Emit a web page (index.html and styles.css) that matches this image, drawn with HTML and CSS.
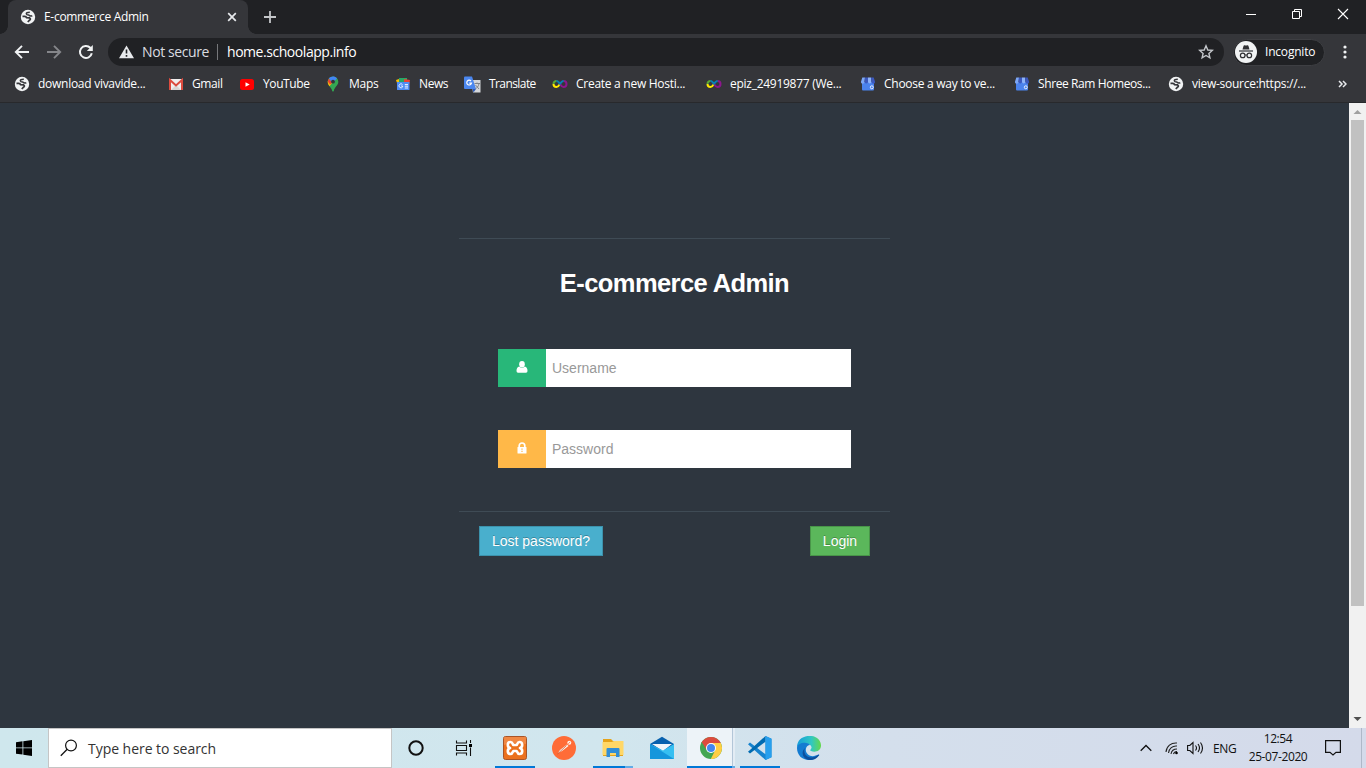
FILE: index.html
```html
<!DOCTYPE html>
<html lang="en">
<head>
<meta charset="utf-8">
<title>E-commerce Admin</title>
<link rel="stylesheet" href="styles.css">
</head>
<body>
<svg class="defs" width="0" height="0" aria-hidden="true">
  <symbol id="globe" viewBox="0 0 16 16"><circle cx="8" cy="8" r="7.200" fill="#f1f3f4"/><path d="M2.500 7.300H4.800Q6 7.400 6.600 8.700L9.600 8.900Q11.200 10 9.500 11.200L7.800 13" fill="none" stroke="#35363a" stroke-width="1.800"/><path d="M9.800 3.200Q6.300 3.200 6.300 4.700 6.400 5.900 8.700 6 10.200 7.700 12.300 6.700" fill="none" stroke="#35363a" stroke-width="1.500"/></symbol>
  <symbol id="infinity" viewBox="0 0 16 16"><path d="M4.600 5A3 3 0 0 0 1.500 8" fill="none" stroke="#5aa936" stroke-width="2"/><path d="M1.500 8c0 1.800 1.300 3 3 3C6 11 6.900 9.800 8 8" fill="none" stroke="#ffe900" stroke-width="2"/><path d="M11.500 5A3 3 0 0 1 14.500 8c0 1.800-1.300 3-3 3C10 11 9.100 9.800 8 8" fill="none" stroke="#8c168d" stroke-width="2"/><path d="M4.400 5C6 5 7 6.200 8 8M8 8C9 6.200 10 5 11.700 5" fill="none" stroke="#087eb5" stroke-width="2"/></symbol>
  <symbol id="shop" viewBox="0 0 16 16"><path d="M2 6h12v7.500a1 1 0 0 1-1 1H3a1 1 0 0 1-1-1z" fill="#4b83ed"/><path d="M2.300 1.500H5L4.500 6a1.800 1.800 0 0 1-3.600 0z" fill="#7da7f5"/><path d="M5 1.500h3V6a1.800 1.800 0 0 1-3.500 0z" fill="#3b58bd"/><path d="M8 1.500h3L11.500 6A1.800 1.800 0 0 1 8 6z" fill="#8db2f8"/><path d="M11 1.500h2.700L15.100 6a1.800 1.800 0 0 1-3.600 0z" fill="#3b58bd"/><circle cx="11.800" cy="11.300" r="1.500" fill="none" stroke="#e6efff"/></symbol>
</svg>

<header class="tabs">
  <div class="tab">
    <svg width="16" height="16"><use href="#globe"/></svg>
    <span class="tab-title">E-commerce Admin</span>
    <svg class="tab-close" width="10" height="10" viewBox="0 0 10 10"><path d="M1.200 1.200 8.800 8.800M8.800 1.200 1.200 8.800" stroke="#e8eaed" stroke-width="1.700"/></svg>
  </div>
  <svg class="plus" width="12" height="12" viewBox="0 0 12 12"><path d="M6 0v12M0 6h12" stroke="#c4c6c9" stroke-width="1.800"/></svg>
  <div class="window-buttons">
    <svg viewBox="0 0 46 30"><path d="M15 14.500h10" stroke="#fff"/></svg>
    <svg viewBox="0 0 46 30"><path d="M15.500 11.500h7v7h-7zM17.500 11V9.500h7v7H23" fill="none" stroke="#fff"/></svg>
    <svg viewBox="0 0 46 30"><path d="m15 9 10 10M25 9 15 19" stroke="#fff" stroke-width="1.100"/></svg>
  </div>
</header>

<nav class="toolbar">
  <svg class="nav-icon" viewBox="0 0 16 16"><path d="M15 8H2M8 1.800 1.800 8 8 14.200" fill="none" stroke="#f1f3f4" stroke-width="1.900"/></svg>
  <svg class="nav-icon" viewBox="0 0 16 16"><path d="M1 8h13M8 1.800 14.200 8 8 14.200" fill="none" stroke="#85868a" stroke-width="1.900"/></svg>
  <svg class="nav-icon" viewBox="0 0 16 16"><path d="M13.800 9.300A6 6 0 1 1 12.300 3.800l1 1" fill="none" stroke="#f1f3f4" stroke-width="2"/><path d="M14.800 1v6h-6z" fill="#f1f3f4"/></svg>
  <div class="omnibox">
    <svg width="15" height="14" viewBox="0 0 15 14"><path d="M7.500.5 15 13.200H0z" fill="#e8eaed"/><path d="M7.500 4.500v4M7.500 10v1.800" stroke="#202124" stroke-width="1.600"/></svg>
    <span class="secure">Not secure</span>
    <span class="url">home.schoolapp.info</span>
    <svg class="star" width="16" height="16" viewBox="0 0 16 16"><path d="m8 1.800 1.800 4.200 4.500.4-3.400 3 1 4.400L8 11.500l-3.900 2.300 1-4.400-3.400-3L6.200 6z" fill="none" stroke="#c4c7cb" stroke-width="1.400"/></svg>
  </div>
  <div class="incognito">
    <svg width="22" height="22" viewBox="0 0 22 22"><circle cx="11" cy="11" r="11" fill="#f1f3f4"/><path d="M7.500 8.500 8.600 4.800q.4-.9 1.300-.5 1.100.5 2.200 0 .9-.4 1.300.5l1.100 3.700z" fill="#303134"/><path d="M4 10h14" stroke="#303134" stroke-width="1.200"/><circle cx="7.700" cy="14.400" r="2.300" fill="none" stroke="#303134" stroke-width="1.200"/><circle cx="14.300" cy="14.400" r="2.300" fill="none" stroke="#303134" stroke-width="1.200"/><path d="M10 14h2" stroke="#303134"/></svg>
    <span>Incognito</span>
  </div>
  <svg class="dots" width="4" height="14" viewBox="0 0 4 14"><g fill="#f1f3f4"><circle cx="2" cy="2" r="1.600"/><circle cx="2" cy="7" r="1.600"/><circle cx="2" cy="12" r="1.600"/></g></svg>
</nav>

<nav class="bookmarks">
  <a><svg><use href="#globe"/></svg><span class="long">download vivavide...</span></a>
  <a><svg viewBox="0 0 16 16"><path d="M1.500 3h13v11h-13z" fill="#f0eeee"/><path d="M3 14 8 9l5 5z" fill="#d8d5d4"/><path d="M2 14V4l6 5.500L14 4v10" fill="none" stroke="#dc4b3e" stroke-width="2"/></svg><span>Gmail</span></a>
  <a><svg viewBox="0 0 16 16"><rect x="1" y="3" width="14" height="11" rx="2.500" fill="#f00"/><path d="m6.500 6.200 4.200 2.300-4.200 2.300z" fill="#fff"/></svg><span>YouTube</span></a>
  <a><svg viewBox="0 0 16 16"><path d="M8 .5a5.300 5.300 0 0 1 5.300 5.300c0 4-3.900 5.200-4.500 9.200q-.8 1.200-1.600 0C6.700 12 3 9.800 2.700 5.800A5.300 5.300 0 0 1 8 .5" fill="#34a853"/><path d="M3 4.500 8 6 4.500 10.200Q2 7 3 4.500" fill="#fbbc04"/><path d="m3.800 2.600 4 3.300L5 8.500 2.800 5.500z" fill="#ea4335"/><path d="M3.900 2.400C6-.2 10-.3 12 2.400L7.500 7z" fill="#4285f4"/><circle cx="8" cy="5.700" r="1.900" fill="#35363a"/></svg><span class="maps">Maps</span></a>
  <a><svg viewBox="0 0 16 16"><path d="m1 4 6-2v5H2z" fill="#fbbc04"/><path d="M4 2h8v6H4z" fill="#28a866"/><path d="m9 3 6 1-1 5H9z" fill="#ea4335"/><path d="M2 6h12.500v7.500q0 .5-.5.500H2.500q-.5 0-.5-.5z" fill="#4f8df5"/><path d="M7.500 8.500a2 2 0 1 0 .1 2.500V10H6M13 8.500H9.800M13 10.200H9.800M13 12H9.800" fill="none" stroke="#e5efff"/></svg><span>News</span></a>
  <a><svg class="big" viewBox="0 0 17 17"><path d="M7 4h9.500v12.500H9z" fill="#d5d7da"/><path d="M1 .5h7l4 12.500H1q-1 0-1-1V1.500q0-1 1-1" fill="#4b87ef"/><path d="M7 5a2.400 2.400 0 1 0 .5 2.200H5.300" fill="none" stroke="#fff" stroke-width="1.200"/><path d="M10.500 7.500H16M13 6.500v1M15 7.500c-.5 3-2 4.500-3.500 5M11.500 9l3.500 4" fill="none" stroke="#777c83" stroke-width=".9"/><path d="m8.500 13 3.500 0-2.500 3.500z" fill="#2d59b6"/></svg><span class="translate">Translate</span></a>
  <a><svg><use href="#infinity"/></svg><span class="long">Create a new Hosti...</span></a>
  <a><svg><use href="#infinity"/></svg><span class="long">epiz_24919877 (We...</span></a>
  <a><svg><use href="#shop"/></svg><span class="long">Choose a way to ve...</span></a>
  <a><svg><use href="#shop"/></svg><span>Shree Ram Homeos...</span></a>
  <a><svg><use href="#globe"/></svg><span class="long">view-source:https://...</span></a>
  <svg class="more" width="9" height="8" viewBox="0 0 9 8"><path d="m1 1 3 3-3 3M5 1l3 3-3 3" fill="none" stroke="#e8eaed" stroke-width="1.500"/></svg>
</nav>

<div class="viewport">
  <main class="page">
    <form class="login">
      <h1>E-commerce Admin</h1>
      <div class="fields">
        <label class="field"><span class="addon user"><svg width="12" height="14" viewBox="0 0 12 14"><ellipse cx="6" cy="4.200" rx="2.800" ry="3.200" fill="#fff"/><path d="M3.200 6.500Q.5 7 .5 11q0 1.700 1.500 1.700h8q1.500 0 1.500-1.700 0-4-2.700-4.500-2.800 2.400-5.600 0" fill="#fff"/></svg></span><input type="text" placeholder="Username"></label>
        <label class="field"><span class="addon lock"><svg width="12" height="14" viewBox="0 0 12 14"><path d="M3.200 7V4.800a2.800 2.800 0 0 1 5.600 0V7" fill="none" stroke="#fff" stroke-width="1.700"/><rect x="1.500" y="6" width="9" height="6.500" rx=".6" fill="#fff"/><path d="M6 7.500v1.300M6 9.700V11" stroke="#ffb848" stroke-width="1.200"/></svg></span><input type="password" placeholder="Password"></label>
      </div>
      <div class="actions"><button type="button" class="info">Lost password?</button><button type="button" class="success">Login</button></div>
    </form>
  </main>
  <div class="scrollbar">
    <svg width="17" height="17"><path d="m4.500 11 4-4 4 4z" fill="#a0a0a0"/></svg>
    <div class="thumb"></div>
    <svg class="down" width="17" height="17"><path d="m4.500 6 4 4 4-4z" fill="#505050"/></svg>
  </div>
</div>

<footer class="taskbar">
  <div class="start"><svg width="16" height="16" viewBox="0 0 16 16"><path d="M0 2.200 6.500 1.300v6.200H0zM7.300 1.200 16 0v7.500H7.300zM0 8.300h6.500v6.300L0 13.700zM7.300 8.300H16V16l-8.700-1.200z"/></svg></div>
  <div class="search"><svg width="18" height="18" viewBox="0 0 18 18"><circle cx="11" cy="6.500" r="5.400" fill="none" stroke="#111" stroke-width="1.200"/><path d="M7.200 10.300.8 16.700" stroke="#111" stroke-width="1.300"/></svg><span>Type here to search</span></div>
  <div class="task"><svg width="16" height="16" viewBox="0 0 16 16"><circle cx="8" cy="8" r="6.700" fill="none" stroke="#111" stroke-width="2"/></svg></div>
  <div class="task view"><svg width="18" height="16" viewBox="0 0 18 16"><path d="M1.500.5V3h10V.5M1.500 15.500V13h10v2.500M1.500 5.500h10v5h-10zM15.500 0v3M15.500 7.500V16" fill="none" stroke="#111" stroke-width="1.100"/><path d="M14 4h3v3h-3z"/></svg></div>
  <div class="task running"><svg width="24" height="24" viewBox="0 0 24 24"><rect x=".5" y=".5" width="23" height="23" rx="2" fill="#eb711e" stroke="#a95427"/><path d="M1 1h22v7Q12 5 1 9z" fill="#f3985e" opacity=".6"/><path d="M7 12C4 11 4 6 7.500 6 10 6 9.500 9 10.500 9h3c1 0 .5-3 3-3C20 6 20 11 17 12c3 1 3 6-.5 6-2.500 0-2-3-3-3h-3c-1 0-.5 3-3 3C4 18 4 13 7 12z" fill="none" stroke="#fff" stroke-width="2.600" stroke-linejoin="round"/></svg></div>
  <div class="task"><svg width="24" height="24" viewBox="0 0 24 24"><circle cx="12" cy="12" r="12" fill="#ff6c37"/><path d="m6 17 2-3 7-5.500 1.500 1.500-6.500 5z" fill="#fff3eb"/><path d="m5.500 18 9-8.500" stroke="#ba5435" stroke-width=".7"/><circle cx="17.300" cy="6.800" r="2" fill="#fff0e7"/><path d="m16.300 7.800 2-2" stroke="#ff6c37" stroke-width=".8"/></svg></div>
  <div class="task running grouped"><svg width="22" height="20" viewBox="0 0 22 20"><path d="M1 1h8l2 2h10v15H1z" fill="#e5a31a"/><path d="M.5 4H10l2-1h9.500v14H.5z" fill="#ffd767"/><path d="M4.500 19v-8q0-1 1-1h11q1 0 1 1v8h-3.500v-4h-6v4z" fill="#318ed6"/></svg></div>
  <div class="task"><svg width="24" height="24" viewBox="0 0 24 24"><path d="M0 8 12 .8 24 8v6H0z" fill="#0861ae"/><path d="M2 8h20l-9 7z" fill="#f1f6fa"/><path d="M0 8v15h24V8l-11 6.500z" fill="#36bff1"/><path d="M0 8v15h24z" fill="#1596dc"/></svg></div>
  <div class="task running active"><svg width="22" height="22" viewBox="0 0 22 22"><circle cx="11" cy="11" r="11" fill="#43a652"/><path d="M1.500 5.500a11 11 0 0 1 19 0L21 7H11l-4.300 6.500z" fill="#dc4b3e"/><path d="M11 6h9.800a11 11 0 0 1-10 16l4.500-9z" fill="#ffce43"/><path d="M1.500 5.500 6.700 14 11 16" fill="none" stroke="#43a652" stroke-width="1"/><circle cx="11" cy="11" r="5" fill="#fff"/><circle cx="11" cy="11" r="4" fill="#4387ef"/></svg></div>
  <div class="task running"><svg width="24" height="24" viewBox="0 0 24 24"><path d="m17.500 0 6 2.700v18.600l-6 2.700L0 8.300 2 6.500l15.500 11.800z" fill="#1683ce"/><path d="M17.500 0v5.700L2 17.500 0 15.700z" fill="#006bb1"/><path d="m17.500 0 6 2.700v18.600l-6 2.700z" fill="#279fed"/></svg></div>
  <div class="task"><svg width="24" height="24" viewBox="0 0 24 24"><defs><linearGradient id="edge-top"><stop stop-color="#149cda"/><stop offset=".6" stop-color="#31c7c2"/><stop offset="1" stop-color="#65d84b"/></linearGradient></defs><path d="M0 11C0-3 23-4 24 9c.4 6-6 8-10 6-2-1 1-2 .5-4-1-4-9-5-14.500 0" fill="url(#edge-top)"/><path d="M0 12c0-5 10-7 13-3-4 0-6 6-2 9.500 3 2.500 7 2 11-.5-2 4-6 6-10 6C5 24 0 19 0 12" fill="#137bd1"/><path d="M8 12c-3 7 5 13 13 7 1-.7 1.600-.2 1 .5-3 4-7 5-11 4.300-6-2-7-8-3-11.800" fill="#0b4f9e"/></svg></div>
  <div class="tray">
    <svg class="chev" width="12" height="8" viewBox="0 0 12 8"><path d="m.7 6.800 5.300-5.300 5.300 5.300" fill="none" stroke="#111" stroke-width="1.300"/></svg>
    <svg class="wifi" width="14" height="14" viewBox="0 0 14 14"><g fill="none" stroke="#222" stroke-width="1.100"><path d="M1 11C1.500 5 6 1.500 12 2M3.500 12C4 7.500 7.500 4.500 12 5M6 13c.5-3 2.500-5 6-5M8.500 13c.4-1.500 1.500-2.500 3.500-2.500"/></g><circle cx="11.500" cy="12" r="1.300"/></svg>
    <svg class="sound" width="17" height="14" viewBox="0 0 17 14"><g fill="none" stroke="#111" stroke-width="1.100"><path d="M.6 4.500h2.200L6 1.500v11L2.800 9.500H.6zM8.500 4.500q2 2.500 0 5M11 3q3 4 0 8M13.500 1.500q4 5.500 0 11"/></g></svg>
    <span class="lang">ENG</span>
    <div class="clock"><span class="time">12:54</span><span class="date">25-07-2020</span></div>
    <svg class="note" width="16" height="16" viewBox="0 0 16 16"><path d="M.6.6h14.800v11.800H11L8 15l-3-2.600H.6z" fill="none" stroke="#111" stroke-width="1.200"/></svg>
    <div class="show-desktop"></div>
  </div>
</footer>
</body>
</html>
```
FILE: styles.css
```css
* { box-sizing: border-box; }
body { margin: 0; width: 1366px; height: 768px; overflow: hidden; display: flex; flex-direction: column; background: #2e363f; font-family: "Open Sans", "Noto Sans", sans-serif; font-size: 12px; color: #fff; }
svg { display: block; flex: none; }
span { white-space: nowrap; }
.defs { position: absolute; }

.tabs { height: 34px; flex: none; background: #202124; display: flex; align-items: flex-start; padding-left: 8px; }
.tab { position: relative; width: 240px; height: 34px; display: flex; align-items: center; padding: 0 11px 0 12px; background: #35363a; border-radius: 8px 8px 0 0; }
.tab::before, .tab::after { content: ""; position: absolute; bottom: 0; width: 8px; height: 8px; }
.tab::before { left: -8px; background: radial-gradient(circle at 0 0, #202124 7.5px, #35363a 8px); }
.tab::after { right: -8px; background: radial-gradient(circle at 100% 0, #202124 7.5px, #35363a 8px); }
.tab-title { margin-left: 8px; padding-bottom: 1px; letter-spacing: -.3px; }
.tab-close { margin-left: auto; }
.plus { margin: 11px 0 0 16px; }
.window-buttons { display: flex; margin-left: auto; margin-right: -3px; }
.window-buttons svg { width: 46px; height: 30px; }

.toolbar { height: 36px; flex: none; background: #35363a; display: flex; align-items: center; padding-left: 14px; font-size: 14px; }
.nav-icon { width: 16px; height: 16px; margin-right: 16px; }
.omnibox { width: 1116px; height: 28px; margin-left: -2px; border-radius: 14px; background: #202124; display: flex; align-items: center; padding: 0 10px 0 11px; }
.secure { margin-left: 8px; width: 67px; color: #dadce0; letter-spacing: -.4px; padding-bottom: 1px; }
.url { margin-left: 8px; padding-left: 9px; border-left: 1px solid #76777a; line-height: 16px; letter-spacing: -.45px; }
.star { margin-left: auto; }
.incognito { width: 92px; height: 27px; margin-left: 9px; border: 1px solid #3e3f43; border-radius: 14px; background: #202124; display: flex; align-items: center; padding-left: 1px; font-size: 12px; }
.incognito span { margin-left: 8px; padding-bottom: 1px; letter-spacing: -.2px; }
.dots { margin-left: 18px; }

.bookmarks { height: 33px; flex: none; background: #35363a; border-bottom: 1px solid #28292c; display: grid; grid-template-columns: 154px 71px 86px 70px 69px 88px 154px 154px 154px 154px 170px 9px; align-items: center; padding: 0 0 4px 14px; }
.bookmarks a { display: flex; align-items: center; gap: 8px; min-width: 0; }
.bookmarks a svg { width: 16px; height: 16px; }
.bookmarks a svg.big { width: 17px; height: 17px; }
.bookmarks span { padding-bottom: 2px; letter-spacing: -.4px; }
.bookmarks .long { letter-spacing: -.27px; }
.bookmarks .maps { letter-spacing: -.25px; }
.bookmarks .translate { letter-spacing: -.58px; }

.viewport { height: 625px; flex: none; display: flex; }
.page { width: 1349px; background: #2e363f; padding-top: 135px; }
.login { width: 431px; margin: 0 0 0 459px; border-top: 1px solid #3f4b55; font-family: "Liberation Sans", Arial, sans-serif; }
.login h1 { margin: 28px 0 0; font-size: 25.5px; line-height: 32px; letter-spacing: -.58px; text-align: center; height: 82px; }
.fields { display: grid; gap: 43px; padding: 0 39px; }
.field { display: flex; height: 38px; }
.addon { width: 48px; display: flex; align-items: center; justify-content: center; }
.addon svg { margin-bottom: 2px; }
.user { background: #28b779; }
.lock { background: #ffb848; }
.field input { width: 305px; border: 0; padding: 0 6px; font: 14px "Liberation Sans", Arial, sans-serif; background: #fff; }
.field input::placeholder { color: #999; }
.actions { margin-top: 43px; border-top: 1px solid #3f4b55; padding: 14px 20px 0; display: flex; justify-content: space-between; }
.actions button { height: 30px; padding: 0 0 1px; color: #fff; font: 14px "Liberation Sans", Arial, sans-serif; text-shadow: 0 -1px 0 rgba(0,0,0,.25); }
.info { width: 124px; background: #49afcd; border: 1px solid #3c92ac; }
.success { width: 60px; background: #5bb75b; border: 1px solid #499549; }

.scrollbar { width: 17px; background: #f1f1f1; display: flex; flex-direction: column; }
.thumb { height: 486px; margin: 0 2px; background: #c1c1c1; }
.down { margin-top: auto; }

.taskbar { height: 40px; flex: none; display: flex; background: linear-gradient(90deg, #cfe7ed, #d1e6ee 45%, #d4dfec 65%, #d4daea); color: #111; }
.start { width: 48px; display: flex; align-items: center; justify-content: center; }
.search { width: 344px; background: #fff; border: 1px solid #c5c5c5; display: flex; align-items: center; padding-left: 11px; font-size: 14px; color: #333; }
.search span { margin-left: 10px; letter-spacing: -.04px; }
.task { position: relative; width: 49px; display: flex; align-items: center; justify-content: center; padding-right: 1px; }
.task.view { width: 50px; padding-right: 4px; }
.running::after { content: ""; position: absolute; bottom: 0; left: 4px; width: 40px; height: 2px; background: #0078d7; }
.grouped::after { background: linear-gradient(90deg, #0078d7 32px, #62ace7 32px); }
.active { background: linear-gradient(90deg, #edf3f8 45px, #b3c6d8 45px 46px, #e3ecf4 46px 48px, transparent 48px); }
.active::after { left: 0; width: 48px; background: linear-gradient(90deg, #0078d7 45px, #62ace7 45px); }
.tray { margin-left: auto; display: flex; align-items: center; }
.wifi { margin-left: 13px; }
.sound { margin-left: 8px; }
.lang { margin-left: 9px; width: 24px; letter-spacing: -.3px; }
.clock { width: 60px; margin-left: 11px; display: flex; flex-direction: column; align-items: center; line-height: 18px; letter-spacing: -.4px; padding-bottom: 1px; }
.note { margin: 0 20px 0 17px; }
.show-desktop { width: 5px; height: 40px; border-left: 1px solid #aeb8c8; }
```
